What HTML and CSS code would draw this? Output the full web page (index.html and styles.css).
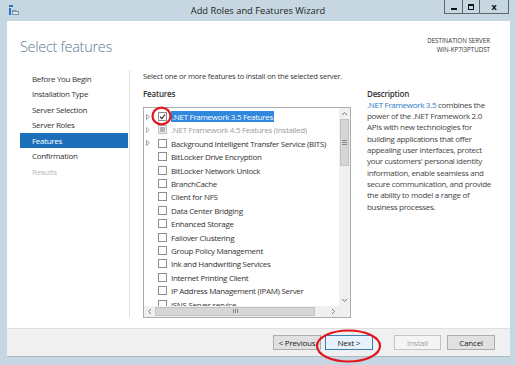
FILE: index.html
```html
<!DOCTYPE html>
<html lang="en">

<head>
  <meta charset="UTF-8">
  <meta name="viewport" content="width=device-width, initial-scale=1.0">
  <link rel="stylesheet" href="styles.css">
  <title>Add Roles and Features Wizard</title>
</head>

<body>

  <div class="window">
    <div class="titlebar">
      <svg class="app-icon" width="10" height="10" viewBox="0 0 10 10">
        <rect x="0" y="0" width="4" height="2" fill="#1f78c8"/>
        <rect x="0" y="3" width="2" height="7" fill="#1f78c8"/>
        <path d="M3 5 H7 L8 6 H10 V10 H3 Z" fill="#7f97a8"/>
        <rect x="4" y="7" width="5" height="2" fill="#dfe8ee"/>
      </svg>
      <div class="title">Add Roles and Features Wizard</div>
      <div class="controls">
        <span class="ctl ctl-min"><i></i></span>
        <span class="ctl ctl-max"><i></i></span>
        <span class="ctl ctl-close">x</span>
      </div>
    </div>

    <div class="client">
      <div class="header">
        <h1>Select features</h1>
        <div class="dest">Destination server<br>WIN-KP7I3PTUDST</div>
      </div>

      <div class="main">
        <ul class="nav">
          <li>Before You Begin</li>
          <li>Installation Type</li>
          <li>Server Selection</li>
          <li>Server Roles</li>
          <li class="active">Features</li>
          <li>Confirmation</li>
          <li class="disabled">Results</li>
        </ul>

        <div class="content">
          <p class="intro">Select one or more features to install on the selected server.</p>

          <div class="columns">
            <div class="features">
              <div class="label">Features</div>
              <div class="listbox">
                <div class="list">
                  <div class="row"><span class="expander"><svg width="4" height="6" viewBox="0 0 4 6"><path d="M0.5 0.5 L3.5 3 L0.5 5.5 Z" fill="none" stroke="#a0a0a0"/></svg></span><span class="cb checked"><svg width="7" height="7" viewBox="0 0 7 7"><path d="M1 3.8 L2.8 5.5 L6 1.5" fill="none" stroke="#333" stroke-width="1.2"/></svg></span><span class="name selected">.NET Framework 3.5 Features</span></div>
                  <div class="row off"><span class="expander"><svg width="4" height="6" viewBox="0 0 4 6"><path d="M0.5 0.5 L3.5 3 L0.5 5.5 Z" fill="none" stroke="#b4b4b4"/></svg></span><span class="cb partial"><i></i></span><span class="name">.NET Framework 4.5 Features (Installed)</span></div>
                  <div class="row"><span class="expander"><svg width="4" height="6" viewBox="0 0 4 6"><path d="M0.5 0.5 L3.5 3 L0.5 5.5 Z" fill="none" stroke="#a0a0a0"/></svg></span><span class="cb"></span><span class="name">Background Intelligent Transfer Service (BITS)</span></div>
                  <div class="row leaf"><span class="cb"></span><span class="name">BitLocker Drive Encryption</span></div>
                  <div class="row leaf"><span class="cb"></span><span class="name">BitLocker Network Unlock</span></div>
                  <div class="row leaf"><span class="cb"></span><span class="name">BranchCache</span></div>
                  <div class="row leaf"><span class="cb"></span><span class="name">Client for NFS</span></div>
                  <div class="row leaf"><span class="cb"></span><span class="name">Data Center Bridging</span></div>
                  <div class="row leaf"><span class="cb"></span><span class="name">Enhanced Storage</span></div>
                  <div class="row leaf"><span class="cb"></span><span class="name">Failover Clustering</span></div>
                  <div class="row leaf"><span class="cb"></span><span class="name">Group Policy Management</span></div>
                  <div class="row leaf"><span class="cb"></span><span class="name">Ink and Handwriting Services</span></div>
                  <div class="row leaf"><span class="cb"></span><span class="name">Internet Printing Client</span></div>
                  <div class="row leaf"><span class="cb"></span><span class="name">IP Address Management (IPAM) Server</span></div>
                  <div class="row leaf"><span class="cb"></span><span class="name">iSNS Server service</span></div>
                </div>

                <div class="vscroll">
                  <span class="arrow"><svg width="7" height="5" viewBox="0 0 7 5"><path d="M1 4 L3.5 1.5 L6 4" fill="none" stroke="#777"/></svg></span>
                  <span class="vthumb"><i></i><i></i><i></i></span>
                  <span class="fill"></span>
                  <span class="arrow"><svg width="7" height="5" viewBox="0 0 7 5"><path d="M1 1 L3.5 3.5 L6 1" fill="none" stroke="#777"/></svg></span>
                </div>

                <div class="hscroll">
                  <span class="arrow"><svg width="5" height="7" viewBox="0 0 5 7"><path d="M4 1 L1.5 3.5 L4 6" fill="none" stroke="#777"/></svg></span>
                  <span class="hthumb"><i></i><i></i><i></i></span>
                  <span class="fill"></span>
                  <span class="arrow"><svg width="5" height="7" viewBox="0 0 5 7"><path d="M1 1 L3.5 3.5 L1 6" fill="none" stroke="#777"/></svg></span>
                </div>
                <div class="corner"></div>
              </div>
            </div>

            <div class="desc">
              <div class="label">Description</div>
              <p class="desc-text"><span class="link">.NET Framework 3.5</span> combines the<br>
                power of the .NET Framework 2.0<br>
                APIs with new technologies for<br>
                building applications that offer<br>
                appealing user interfaces, protect<br>
                your customers' personal identity<br>
                information, enable seamless and<br>
                secure communication, and provide<br>
                the ability to model a range of<br>
                business processes.</p>
            </div>
          </div>
        </div>
      </div>

      <div class="footer">
        <button>&lt; Previous</button>
        <button class="btn-next">Next &gt;</button>
        <button class="btn-install" disabled>Install</button>
        <button class="btn-cancel">Cancel</button>
      </div>
    </div>

    <!-- hand drawn marks over the screenshot -->
    <svg class="marks" width="516" height="365" viewBox="0 0 516 365">
      <ellipse cx="161.5" cy="116" rx="9" ry="8.3" fill="none" stroke="#e2151d" stroke-width="2.2"/>
      <ellipse cx="348.5" cy="346" rx="31.5" ry="15.5" fill="none" stroke="#e2151d" stroke-width="2.2"/>
    </svg>
  </div>

</body>

</html>
```

FILE: styles.css
```css
* {
  box-sizing: border-box;
}

body {
  margin: 0;
  font-family: "Open Sans", "Noto Sans", sans-serif;
  color: #333;
}

.window {
  position: relative;
  width: 516px;
  height: 365px;
  background-color: #c6d7e1;
  overflow: hidden;
}

/* title bar */
.titlebar {
  display: grid;
  grid-template-columns: 1fr auto 1fr;
  height: 21px;
}

.app-icon {
  margin: 5px 0 0 9px;
}

.title {
  font-size: 9.3px;
  line-height: 22px;
  color: #1e1e1e;
}

.controls {
  justify-self: end;
  display: flex;
  height: 14px;
  margin-right: 7px;
  border-left: 1px solid #5d676d;
}

.ctl {
  display: flex;
  align-items: center;
  justify-content: center;
  height: 14px;
  border-right: 1px solid #5d676d;
  border-bottom: 1px solid #5d676d;
}

.ctl-min {
  width: 18px;
}

.ctl-min i {
  width: 6px;
  height: 2px;
  margin-top: 5px;
  background-color: #111;
}

.ctl-max {
  width: 17px;
}

.ctl-max i {
  width: 6px;
  height: 6px;
  border: 1px solid #111;
  border-top-width: 2px;
}

.ctl-close {
  width: 29px;
  font-size: 9px;
  font-weight: bold;
  line-height: 12px;
  color: #111;
}

/* window body */
.client {
  display: flex;
  flex-direction: column;
  height: 336px;
  margin: 0 6px 0 7px;
  background-color: #fff;
  border-bottom: 1px solid #a9bac4;
}

.header {
  display: flex;
  justify-content: space-between;
  height: 49px;
  padding: 15px 20px 0 13px;
}

h1 {
  margin: 0;
  padding-top: 1px;
  font-size: 14.5px;
  font-weight: 300;
  line-height: 20px;
  letter-spacing: -0.3px;
  color: #5a7a92;
}

.dest {
  font-size: 6.2px;
  line-height: 9px;
  text-align: right;
  text-transform: uppercase;
  color: #333;
}

.main {
  display: flex;
  height: 259px;
}

.nav {
  width: 123px;
  height: 247px;
  margin: 0;
  padding: 1px 0 0;
  list-style: none;
  border-right: 1px solid #dedede;
}

.nav li {
  margin: 0 1px 0 13px;
  padding-left: 12px;
  font-size: 8px;
  line-height: 15.5px;
  letter-spacing: -0.3px;
  color: #333;
}

.nav li.active {
  background-color: #1c6fb8;
  color: #fff;
}

.nav li.disabled {
  color: #b9b9b9;
}

.content {
  flex: 1;
  padding-left: 13px;
}

.intro {
  margin: 0;
  font-size: 7.6px;
  line-height: 12px;
  letter-spacing: -0.22px;
  color: #333;
}

.columns {
  display: flex;
  gap: 16px;
  margin-top: 6px;
}

.label {
  font-size: 8px;
  font-weight: 600;
  line-height: 11px;
  letter-spacing: -0.2px;
  color: #333;
}

.features {
  width: 208px;
}

.features .label {
  margin-bottom: 8px;
}

/* feature list box */
.listbox {
  display: grid;
  grid-template-columns: 1fr 11px;
  grid-template-rows: 1fr 11px;
  height: 211px;
  border: 1px solid #acacac;
}

.list {
  overflow: hidden;
  padding-top: 2px;
}

.row {
  display: flex;
  align-items: center;
  height: 13.4px;
  font-size: 8px;
  letter-spacing: -0.3px;
  white-space: nowrap;
  color: #333;
}

.row.leaf {
  padding-left: 14px;
}

.expander {
  display: flex;
  width: 14px;
  padding-left: 2px;
}

.cb {
  display: flex;
  align-items: center;
  justify-content: center;
  flex-shrink: 0;
  width: 9px;
  height: 9px;
  margin-right: 4px;
  border: 1px solid #8e8e8e;
  background-color: #fff;
}

.cb.partial {
  border-color: #bdbdbd;
  background-color: #efefef;
}

.cb.partial i {
  width: 5px;
  height: 5px;
  background-color: #b3b3b3;
}

.row.off {
  color: #9c9c9c;
}

.name.selected {
  padding: 0 1px;
  background-color: #3088dc;
  color: #fff;
}

.vscroll {
  display: flex;
  flex-direction: column;
  align-items: center;
  background-color: #f0f0f0;
}

.hscroll {
  display: flex;
  align-items: center;
  background-color: #f0f0f0;
}

.arrow {
  display: flex;
  align-items: center;
  justify-content: center;
  width: 11px;
  height: 11px;
}

.fill {
  flex: 1;
}

.vthumb {
  display: flex;
  flex-direction: column;
  align-items: center;
  justify-content: center;
  gap: 1px;
  width: 9px;
  height: 47px;
  background-color: #d6d6d6;
  border: 1px solid #c2c2c2;
}

.vthumb i {
  width: 5px;
  height: 1px;
  background-color: #8a8a8a;
}

.hthumb {
  display: flex;
  align-items: center;
  justify-content: center;
  gap: 1px;
  width: 160px;
  height: 9px;
  background-color: #d6d6d6;
  border: 1px solid #c2c2c2;
}

.hthumb i {
  width: 1px;
  height: 4px;
  background-color: #8a8a8a;
}

.corner {
  background-color: #f0f0f0;
}

/* description panel */
.desc {
  width: 130px;
}

.desc-text {
  margin: 0;
  font-size: 8px;
  line-height: 11.3px;
  letter-spacing: -0.3px;
  white-space: nowrap;
  color: #444;
}

.link {
  color: #1e7bc6;
}

/* buttons */
.footer {
  display: flex;
  justify-content: flex-end;
  height: 28px;
  padding: 6px 15px 0 0;
  background-color: #f0f0f0;
  border-top: 1px solid #dfdfdf;
}

button {
  width: 48px;
  height: 15px;
  padding: 0;
  font-family: inherit;
  font-size: 8px;
  line-height: 13px;
  letter-spacing: -0.2px;
  color: #222;
  background-color: #e1e1e1;
  border: 1px solid #adadad;
}

.btn-next {
  margin-left: 4px;
  background-color: #e5f1fb;
  border-color: #3c7fb1;
}

.btn-install {
  width: 47px;
  margin-left: 21px;
  color: #a3a3a3;
  background-color: #f4f4f4;
  border-color: #c4c4c4;
}

.btn-cancel {
  margin-left: 6px;
}

.marks {
  position: absolute;
  top: 0;
  left: 0;
  pointer-events: none;
}
```
